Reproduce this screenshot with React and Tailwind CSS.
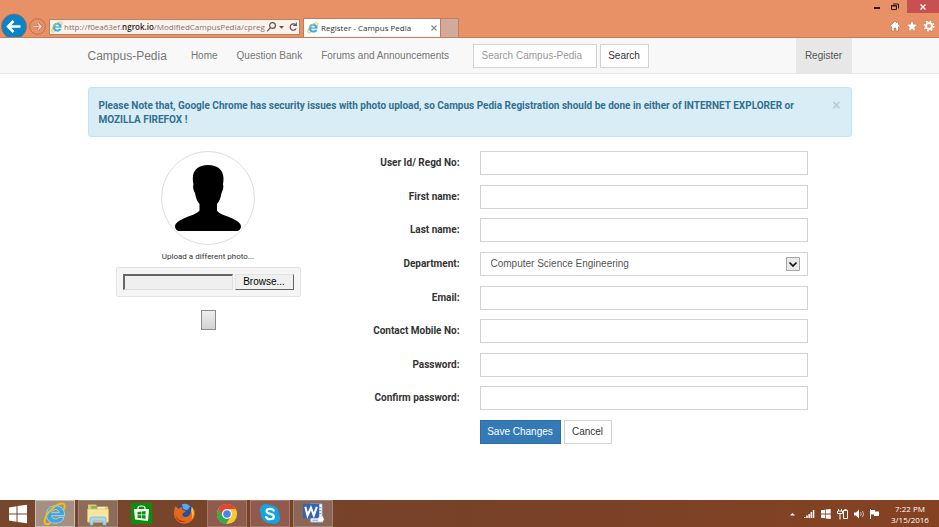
import React from "react";

function IELogo({ className }) {
  return (
    <svg viewBox="0 0 24 24" className={className} aria-hidden="true">
      <path
        d="M21.6 13.6H8.6c.2 2 1.7 3.4 3.9 3.4 1.600 0 2.700-.6 3.300-1.700h5.300c-1.100 3.800-4.500 6-8.700 6-5.400 0-9-3.600-9-8.700 0-5.200 3.700-8.900 9-8.900 5.700 0 9.400 3.900 9.200 9.900zM8.700 10.600h7.400c-.2-1.900-1.600-3.100-3.600-3.100s-3.400 1.200-3.800 3.100z"
        fill="#35a9e6"
        stroke="#d9f1fd"
        strokeWidth=".6"
      />
      <path
        d="M21 7.200C22.600 3.500 21.600 1.400 18.800 1.600 12.500 2 3.200 10.800 1.700 18.300c-.7 3.700 1.500 4.900 5.100 3.100"
        fill="none"
        stroke="#f3bd22"
        strokeWidth="2"
        strokeLinecap="round"
      />
    </svg>
  );
}

function BrowserChrome() {
  return (
    <header className="flex h-[38px] flex-col border-b border-[#cf7a52] bg-[#e99166] font-['Open_Sans','Noto_Sans',sans-serif]">
      <div className="flex h-[13px] shrink-0 items-start justify-end">
        <button aria-label="Minimize" className="flex h-[13px] w-5 items-end justify-center pb-1">
          <span className="h-[2px] w-[6px] bg-[#2b1b12]" />
        </button>
        <button aria-label="Restore" className="flex h-[13px] w-[16px] items-center justify-center">
          <svg viewBox="0 0 8 8" className="size-2" fill="none" stroke="#2b1b12">
            <path d="M.5 2.500h5v4h-5zM2 1h5.500v4.500" />
            <path d="M.5 2.800h5" strokeWidth="1.400" />
          </svg>
        </button>
        <button aria-label="Close" className="ml-[4px] flex h-[13px] w-8 items-center justify-center bg-[#c75050]">
          <svg viewBox="0 0 6 6" className="size-[6px]" stroke="#fff" strokeWidth="1.300">
            <path d="M.5.5l5 5M5.500.5l-5 5" />
          </svg>
        </button>
      </div>
      <div className="flex h-6 items-end">
        <button aria-label="Back" className="mr-[2px] ml-[1px] self-center">
          <svg viewBox="0 0 26 24" className="h-6 w-[26px]">
            <circle cx="13" cy="13.500" r="12.500" fill="#0a84c6" stroke="#9c6a55" strokeWidth=".8" />
            <path d="M19.500 13.500H7.500M12.500 8l-5.500 5.500 5.500 5.500" fill="none" stroke="#fff" strokeWidth="2.600" />
          </svg>
        </button>
        <button aria-label="Forward" className="mr-[3px] self-end pb-[2px]">
          <svg viewBox="0 0 18 18" className="size-[17px]" fill="none">
            <circle cx="9" cy="9" r="8.300" stroke="#b86f50" strokeWidth="1" />
            <path d="M4.500 9h8M9.500 5.500L13 9l-3.500 3.500" stroke="#b86f50" strokeWidth="3" />
            <path d="M4.500 9h8M9.500 5.500L13 9l-3.500 3.500" stroke="#f8d9ca" strokeWidth="1.400" />
          </svg>
        </button>
        <div className="mr-[3px] mb-[2px] flex h-4 w-[251px] items-center border border-[#b98268] bg-[#fdf1ec] pl-[1px] text-[8px] leading-[14px] text-[#777]">
          <IELogo className="size-3 shrink-0" />
          <span className="ml-[1px] flex-1 whitespace-nowrap">
            http://f0ea63ef.<b className="font-semibold text-[#222]">ngrok.io</b>/ModifiedCampusPedia/cpreg
          </span>
          <svg viewBox="1 0 32 12" className="h-3 w-[32px] shrink-0" fill="none" stroke="#5c5350" strokeWidth="1.200">
            <circle cx="6.500" cy="4.500" r="2.900" />
            <path d="M4.500 6.700L1 10.300" />
            <path d="M13 5h5l-2.500 2.700z" fill="#5c5350" stroke="none" />
            <path d="M29.800 4A3.200 3.200 0 1 0 30.200 7.500" />
            <path d="M30.300 1.500v3h-3" />
          </svg>
        </div>
        <div className="flex h-[19px] w-[138px] items-center border-x border-t border-[#c5795a] bg-white px-[3px]">
          <IELogo className="size-3 shrink-0" />
          <span className="ml-[2px] flex-1 text-[8px] leading-3 whitespace-nowrap text-[#333]">Register - Campus Pedia</span>
          <button aria-label="Close tab">
            <svg viewBox="0 0 6 6" className="size-[6px]" stroke="#8a8a8a" strokeWidth="1.200">
              <path d="M.5.5l5 5M5.500.5l-5 5" />
            </svg>
          </button>
        </div>
        <button aria-label="New tab" className="h-[19px] w-[18px] border-t border-r border-[#b98268] bg-[#d2aa9b]" />
        <div className="mr-[4px] ml-auto flex gap-[5px] self-end pb-[5px]">
          <button aria-label="Home page">
            <svg viewBox="0 0 12 12" className="size-3" fill="#fff" stroke="#a56144" strokeWidth=".6">
              <path d="M6 1L.8 6.200l1 1 .7-.6V11h2.700V8h1.600v3h2.700V6.600l.7.6 1-1-1.700-1.700V1.800H7.900v1.100z" />
            </svg>
          </button>
          <button aria-label="Favorites">
            <svg viewBox="0 0 12 12" className="size-3" fill="#fff" stroke="#a56144" strokeWidth=".4">
              <path d="M6 .3l1.600 3.900 4.200.3-3.200 2.700 1 4.200L6 9.200l-3.600 2.200 1-4.200L.2 4.500l4.200-.3z" />
            </svg>
          </button>
          <button aria-label="Tools">
            <svg viewBox="0 0 12 12" className="size-3" fill="none" stroke="#fff">
              <circle cx="6" cy="6" r="4.900" stroke="#a56144" strokeWidth="2" strokeDasharray="2.200 1.650" />
              <circle cx="6" cy="6" r="4.800" strokeWidth="1.700" strokeDasharray="1.900 1.870" />
              <circle cx="6" cy="6" r="3" strokeWidth="1.900" />
            </svg>
          </button>
        </div>
      </div>
    </header>
  );
}

function Navbar() {
  return (
    <nav className="border-b border-[#e7e7e7] bg-[#f8f8f8]">
      <div className="mx-auto flex h-[35px] w-full max-w-[764px] items-center text-[#777]">
        <a href="#" className="text-[12px]">Campus-Pedia</a>
        <a href="#" className="ml-6">Home</a>
        <a href="#" className="ml-[19px]">Question Bank</a>
        <a href="#" className="ml-[19px]">Forums and Announcements</a>
        <form className="ml-auto flex gap-[3px]">
          <input
            type="text"
            aria-label="Search Campus-Pedia"
            placeholder="Search Campus-Pedia"
            className="h-6 w-[124px] border border-[#d2d2d2] bg-white px-2 placeholder:text-[#999]"
          />
          <button type="button" className="h-6 w-[49px] border border-[#d2d2d2] bg-white text-[#333]">Search</button>
        </form>
        <a href="#" className="ml-[147px] flex h-full w-[56px] items-center justify-center bg-[#e7e7e7] text-[#555]">
          Register
        </a>
      </div>
    </nav>
  );
}

function PhotoUpload() {
  return (
    <section className="flex w-[241px] shrink-0 flex-col items-center">
      <div className="flex size-[94px] items-center justify-center rounded-full border border-[#ddd]">
        <svg viewBox="0 0 66 66" className="size-[66px]" role="img" aria-label="avatar">
          <path d="M33 0c9.500 0 15.500 5 15.500 13.500 0 2.500-.3 4.500-.5 6 .8 1.500.2 6-1.500 8.500-.8 5-2.300 8.500-4.500 11v6.500c1.500 3 7 4.500 13 7C62 55.500 66 58 66 61.500c0 2.500-2 4.500-4.500 4.500h-57C2 66 0 64 0 61.500 0 58 4 55.500 11 52.500c6-2.500 11.500-4 13.500-7V39c-2.200-2.500-3.700-6-4.500-11-1.700-2.500-2.300-7-1.500-8.500-.3-1.500-.7-3.500-.7-6C17.800 5 23.500 0 33 0z" />
        </svg>
      </div>
      <label htmlFor="photo" className="mt-[5px] font-['Roboto',sans-serif] text-[8px] leading-[14px]">
        Upload a different photo...
      </label>
      <div className="mt-[3px] flex w-[185px] gap-[2px] rounded-[2px] border border-[#e3e3e3] bg-[#f5f5f5] p-[6px]">
        <input
          id="photo"
          type="text"
          readOnly
          className="h-4 min-w-0 flex-1 border-t-2 border-r border-b border-l-2 border-t-[#666] border-r-[#ddd] border-b-[#ddd] border-l-[#666] bg-[#efefef]"
        />
        <button
          type="button"
          className="h-4 w-[59px] border border-t-[#e3e3e3] border-r-[#666] border-b-[#666] border-l-[#e3e3e3] bg-[#f0f0f0] leading-[14px] text-black"
        >
          Browse...
        </button>
      </div>
      <button
        type="button"
        aria-label="Upload"
        className="mt-[13px] h-5 w-[15px] border border-[#8a8a8a] bg-linear-to-b from-[#eee] to-[#d2d2d2]"
      />
    </section>
  );
}

const departments = ["Computer Science Engineering"];

const fields = [
  { id: "userid", label: "User Id/ Regd No:", type: "text" },
  { id: "first", label: "First name:", type: "text" },
  { id: "last", label: "Last name:", type: "text" },
  { id: "department", label: "Department:", type: "select" },
  { id: "email", label: "Email:", type: "text" },
  { id: "mobile", label: "Contact Mobile No:", type: "text" },
  { id: "password", label: "Password:", type: "password" },
  { id: "confirm", label: "Confirm password:", type: "password" },
];

function Field({ id, label, type }) {
  return (
    <div className="flex items-center gap-5">
      <label htmlFor={id} className="w-[131px] shrink-0 text-right font-['Roboto',sans-serif] font-bold">{label}</label>
      {type === "select" ? (
        <div className="relative flex-1">
          <select id={id} className="block h-6 w-full appearance-none border border-[#d2d2d2] bg-white px-[10px] text-[#555]">
            {departments.map((name) => (
              <option key={name}>{name}</option>
            ))}
          </select>
          <svg viewBox="0 0 14 14" className="pointer-events-none absolute top-[5px] right-2 size-[14px]" fill="none">
            <path d="M.5.5h13v13H.5z" fill="#e9e9e9" stroke="#a5a5a5" />
            <path d="M3.500 5.500L7 9l3.500-3.500" stroke="#111" strokeWidth="1.700" />
          </svg>
        </div>
      ) : (
        <input id={id} type={type} className="h-6 min-w-0 flex-1 border border-[#d2d2d2] bg-white px-2" />
      )}
    </div>
  );
}

function RegisterForm() {
  return (
    <form className="mr-11 flex min-h-[293px] flex-1 flex-col justify-between">
      {fields.map((field) => (
        <Field key={field.id} {...field} />
      ))}
      <div className="flex gap-[3px] pl-[151px]">
        <button type="button" className="h-6 w-[81px] border border-[#2e6da4] bg-[#337ab7] text-white">Save Changes</button>
        <button type="button" className="h-6 w-12 border border-[#d2d2d2] bg-white">Cancel</button>
      </div>
    </form>
  );
}

function FolderIcon() {
  return (
    <svg viewBox="0 0 24 24" className="size-6">
      <path d="M2 2.500h8l1 2h11v16H2z" fill="#e9c864" />
      <path d="M5 4h6v3H5z" fill="#6fbf72" />
      <path d="M12 5h7v3h-7z" fill="#f4f0dc" />
      <path d="M1.500 7h21v13h-21z" fill="#f8e6a0" stroke="#dcb851" strokeWidth=".6" />
      <path d="M4 23v-6q0-2 2-2h12q2 0 2 2v6h-3v-4H7v4z" fill="#a9d8ee" stroke="#75b2d2" strokeWidth=".7" />
    </svg>
  );
}

function StoreIcon() {
  return (
    <svg viewBox="0 0 21 21" className="size-[21px]">
      <path d="M0 0h21v21H0z" fill="#0a8f0a" />
      <path d="M3 6h15l-1 12L4 16.500z" fill="#fff" />
      <path d="M7 6.500V5q0-2 3.500-2T14 5v1.500" fill="none" stroke="#fff" strokeWidth="1.200" />
      <path d="M6.500 9l3.500-.4v3H6.500zM10.600 8.500l4-.4v3.500h-4zM6.500 12.200H10v3l-3.500-.4zM10.600 12.200h4v3.600l-4-.5z" fill="#0a8f0a" />
    </svg>
  );
}

function FirefoxIcon() {
  return (
    <svg viewBox="0 0 24 24" className="size-[23px]">
      <circle cx="12.500" cy="11" r="9.500" fill="#26509b" />
      <path d="M9 2.500q6-2 9 2l-3 4-4-1z" fill="#5fa8e0" />
      <path d="M2.500 4.500L6 7c2-2 4-1.500 4-1.500-1 1.500-.5 2.500 1 3.200l2.500.8-2.500 2c-1.500.5-2 2 0 3.500 4 2 7-1 7.500-4l1-6C23 8 24 13 21.500 17c-2.500 4.500-7 6-11 5.500C5 22 1 17.500 1 12c0-3 .5-5 1.500-7.500z" fill="#e5691d" />
      <path d="M19.500 5c3 4 3 9 0 13 0 0 1.500-6-.5-8z" fill="#f9c83c" />
      <path d="M2.500 13c1.500 5 6 7.500 11 6.500-3.500 3-10 1.500-11-6.500z" fill="#bd3413" />
    </svg>
  );
}

function ChromeIcon() {
  return (
    <svg viewBox="0 0 24 24" className="size-[22px]">
      <circle cx="12" cy="12" r="11" fill="#fbc92d" />
      <path d="M2.500 6.500A11 11 0 0 1 21.500 6.500H12A5.500 5.500 0 0 0 6.800 14z" fill="#e14438" />
      <path d="M2.500 6.500A11 11 0 0 0 11 23l5-8.500A5 5 0 0 1 7.200 14.500z" fill="#35a853" />
      <circle cx="12" cy="12" r="5.300" fill="#fff" />
      <circle cx="12" cy="12" r="4.100" fill="#4586ee" />
    </svg>
  );
}

function SkypeIcon() {
  return (
    <svg viewBox="0 0 24 24" className="size-[22px]">
      <circle cx="12" cy="12" r="10" fill="#12a5e4" />
      <circle cx="7.500" cy="7.500" r="6.500" fill="#12a5e4" />
      <circle cx="16.500" cy="16.500" r="6.500" fill="#12a5e4" />
      <path d="M16 8.300c-.8-1.600-2.200-2-4-2-2.200 0-3.800.9-3.800 2.600 0 4 8 1.800 8 5.800 0 2-1.900 3-4.100 3-2 0-3.600-.7-4.300-2.400" fill="none" stroke="#fff" strokeWidth="2.400" strokeLinecap="round" />
    </svg>
  );
}

function WordIcon() {
  return (
    <svg viewBox="0 0 24 24" className="size-[23px]">
      <path d="M9 2h12v19H9z" fill="#f7fafe" stroke="#8aa9d6" strokeWidth=".8" />
      <path d="M18 6h2M18 9h2M18 12h2M11 19h6" stroke="#6e94cc" />
      <path d="M1 2h17v15H1z" fill="#3365b5" />
      <path d="M3.500 5l2.300 9 3.500-8 3 8 3.200-9" fill="none" stroke="#fff" strokeWidth="2.200" />
      <path d="M17 16h4v-2l2 4-2 4v-2h-4z" fill="#fff" />
    </svg>
  );
}

const apps = [
  { name: "Internet Explorer", icon: <IELogo className="size-6" />, style: "border-[#cbbdb2] bg-[#a58f80]" },
  { name: "File Explorer", icon: <FolderIcon />, style: "border-[#a08471] bg-[#8c6c58]" },
  { name: "Store", icon: <StoreIcon />, style: "border-transparent" },
  { name: "Firefox", icon: <FirefoxIcon />, style: "border-transparent" },
  { name: "Chrome", icon: <ChromeIcon />, style: "border-[#a5786b] bg-[#8f5b4c]" },
  { name: "Skype", icon: <SkypeIcon />, style: "border-[#a5786b] bg-[#925a4d]" },
  { name: "Word", icon: <WordIcon />, style: "border-[#a08471] bg-[#8c6656]" },
];

function Taskbar() {
  return (
    <footer className="mt-auto flex h-[27px] items-center bg-linear-to-r from-[#76472d] via-[#774128] to-[#854222] font-['Open_Sans','Noto_Sans',sans-serif] text-white">
      <button aria-label="Start" className="flex w-[35px] justify-center">
        <svg viewBox="0 0 20 20" className="size-5" fill="#fff">
          <path d="M1 3.500l7.500-1.200v7.200H1zM9.500 2.100L19 .8v8.700H9.500zM1 10.500h7.500v7.200L1 16.500zM9.500 10.500H19v8.700l-9.500-1.300z" />
        </svg>
      </button>
      <div className="flex gap-[3px]">
        {apps.map((app) => (
          <button
            key={app.name}
            aria-label={app.name}
            className={"flex h-[27px] w-10 items-center justify-center border " + app.style}
          >
            {app.icon}
          </button>
        ))}
      </div>
      <svg viewBox="0 0 92 14" className="ml-auto h-[14px] w-[92px]" fill="#fff">
        <path d="M1 8.500h5L3.500 6z" />
        <path d="M15 10h1.500v1H15zM17.200 8.500h1.500V11h-1.500zM19.400 7h1.500v4h-1.500zM21.600 5h1.500v6h-1.500zM23.800 3h1.500v8h-1.500z" />
        <path d="M32 3.300l4-.6v3.900h-4zM36.700 2.600l5-.7v4.700h-5zM32 7.400h4v3.900l-4-.6zM36.700 7.400h5v4.700l-5-.7z" />
        <path d="M49.500 2v2M52.500 2v2M48.500 4h5v2.500h-5zM51 6.500v6" fill="none" stroke="#fff" />
        <path d="M54.500 3.500h4v8h-4zM55.500 2.500h2" fill="none" stroke="#fff" />
        <path d="M65 5.500h2l3-3v9l-3-3h-2z" />
        <path d="M71.500 5q1.500 2 0 4M73.500 4q2 3 0 6" fill="none" stroke="#e8d6cb" strokeWidth=".8" />
        <path d="M81 2h1v10h-1zM82 3h4v1.500h4V9h-5V7.500h-3z" />
      </svg>
      <div className="mr-2 ml-2 w-[42px] text-center text-[8px] leading-[11px] whitespace-nowrap">
        <div>7:22 PM</div>
        <div>3/15/2016</div>
      </div>
    </footer>
  );
}

export default function App() {
  return (
    <div className="flex min-h-screen flex-col bg-white font-['Liberation_Sans',Arial,sans-serif] text-[10px] leading-[14px] text-[#333]">
      <BrowserChrome />
      <Navbar />
      <main className="mx-auto w-full max-w-[764px] pt-[13px]">
        <div role="alert" className="flex items-start rounded-[3px] border border-[#bce8f1] bg-[#d9edf7] px-[10px] pt-[11px] pb-[9px] text-[#31708f]">
          <strong className="flex-1 pr-2 font-['Roboto',sans-serif]">
            Please Note that, Google Chrome has security issues with photo upload, so Campus Pedia Registration should be done in either of INTERNET EXPLORER or MOZILLA FIREFOX !
          </strong>
          <button aria-label="Dismiss" className="h-3 text-[14px] leading-3 font-bold text-[#b3cfdc]">×</button>
        </div>
        <div className="mt-[14px] flex">
          <PhotoUpload />
          <RegisterForm />
        </div>
      </main>
      <Taskbar />
    </div>
  );
}
